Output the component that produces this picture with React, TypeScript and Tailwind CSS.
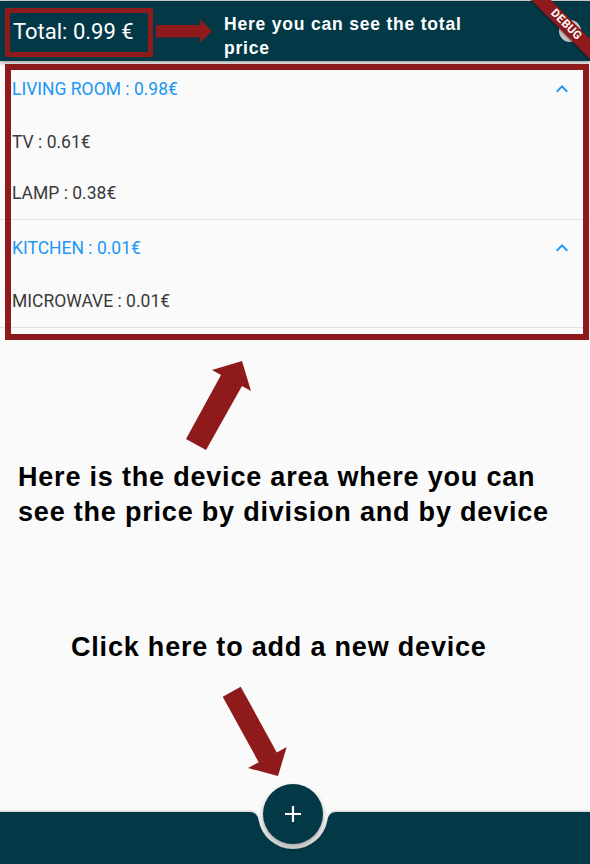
import React from 'react';

const rooms = [
  {
    name: 'LIVING ROOM',
    total: '0.98',
    devices: [
      { name: 'TV', price: '0.61' },
      { name: 'LAMP', price: '0.38' },
    ],
  },
  {
    name: 'KITCHEN',
    total: '0.01',
    devices: [{ name: 'MICROWAVE', price: '0.01' }],
  },
];

function ExpandLess() {
  return (
    <svg width="24" height="24" viewBox="0 0 24 24" className="fill-[#2196f3]">
      <path d="M7.41 15.41L12 10.83l4.59 4.58L18 14l-6-6-6 6z" />
    </svg>
  );
}

function DebugBanner() {
  return (
    <div className="absolute top-0 right-0 w-[60px] h-[60px] overflow-hidden pointer-events-none">
      <div className="absolute left-[-14px] top-[18px] w-[100px] h-[14px] rotate-45 bg-[#8e1a1c] shadow-[0_1px_2px_rgba(0,0,0,0.4)] flex items-center justify-center">
        <span className="text-white text-[11.5px] font-bold leading-none tracking-[0.3px] font-['Roboto','Liberation_Sans',sans-serif]">
          DEBUG
        </span>
      </div>
    </div>
  );
}

function Annotations() {
  return (
    <svg
      className="absolute inset-0 pointer-events-none"
      width="590"
      height="864"
      viewBox="0 0 590 864"
    >
      <g fill="#8e1a1c">
        <polygon points="156,25 200,25 200,19 212,31 200,43 200,37.6 156,37.6" />
        <polygon points="186,439 221,375 212,370 242,361 251,391 242,386 206,450" />
        <polygon points="222.7,696.7 258.7,762.2 248,768 278,776 286.7,747 276.8,752.4 240.7,686.7" />
      </g>
    </svg>
  );
}

export default function App() {
  return (
    <div className="relative w-[590px] h-[864px] overflow-hidden bg-[#fafafa] flex flex-col font-['Roboto',sans-serif]">
      <div className="h-px bg-[#cfcfcf]" />

      {/* app bar */}
      <div className="relative z-10 h-[60px] bg-[#033847] flex items-center justify-between shadow-[0_2px_4px_rgba(0,0,0,0.35)]">
        <span className="pl-[13px] text-white text-[22px]">Total: 0.99 €</span>
        <div className="mr-[9px] w-[22px] h-[22px] rounded-full bg-[#c4c4c4]" />
      </div>

      {/* rooms */}
      <div className="flex flex-col">
        {rooms.map((room) => (
          <div key={room.name} className="flex flex-col border-b border-[#e0e0e0]">
            <div className="h-[56px] flex items-center justify-between pl-[12px] pr-[16px]">
              <span className="text-[17.5px] text-[#2196f3]">
                {room.name} : {room.total}€
              </span>
              <ExpandLess />
            </div>
            {room.devices.map((d) => (
              <div key={d.name} className="h-[51px] flex items-center pl-[12px]">
                <span className="text-[17.5px] text-[#3a3a3a]">
                  {d.name} : {d.price}€
                </span>
              </div>
            ))}
          </div>
        ))}
      </div>

      {/* annotation texts in the empty area */}
      <div className="mt-[132px] pl-[18px] text-[27px] leading-[35px] font-bold tracking-[0.8px] text-black font-['Liberation_Sans',Arial,sans-serif]">
        <p>Here is the device area where you can</p>
        <p>see the price by division and by device</p>
      </div>
      <p className="mt-[100px] pl-[71px] text-[27px] leading-[35px] font-bold tracking-[0.8px] text-black font-['Liberation_Sans',Arial,sans-serif]">
        Click here to add a new device
      </p>

      <div className="flex-1" />

      {/* bottom app bar with notch */}
      <div className="relative h-[52px]">
        <svg
          className="absolute inset-0 drop-shadow-[0_-1px_1px_rgba(0,0,0,0.18)]"
          width="590"
          height="52"
          viewBox="0 0 590 52"
        >
          <path
            d="M0 0 H250 Q257 0 258.5 8 A35 35 0 0 0 327.5 8 Q329 0 336 0 H590 V52 H0 Z"
            fill="#033847"
          />
        </svg>
        <button className="absolute left-[263px] top-[-28px] w-[60px] h-[60px] rounded-full bg-[#033847] flex items-center justify-center shadow-[0_3px_5px_rgba(0,0,0,0.35)]">
          <svg width="20" height="20" viewBox="0 0 20 20" stroke="white" strokeWidth="2.2">
            <path d="M10 2 V18 M2 10 H18" />
          </svg>
        </button>
      </div>

      {/* overlay annotations */}
      <div className="absolute left-[5px] top-[8px] w-[148px] h-[49px] border-[5px] border-[#8e1a1c] z-20" />
      <div className="absolute left-[5px] top-[64px] w-[584px] h-[276px] border-[6px] border-[#8e1a1c] z-20" />
      <p className="absolute left-[224px] top-[12px] w-[270px] z-20 text-white font-bold text-[17.5px] leading-[24px] tracking-[0.8px] font-['Liberation_Sans',Arial,sans-serif]">
        Here you can see the total price
      </p>
      <div className="absolute inset-0 z-20 pointer-events-none">
        <Annotations />
      </div>
      <div className="absolute inset-0 z-30 pointer-events-none">
        <DebugBanner />
      </div>
    </div>
  );
}
